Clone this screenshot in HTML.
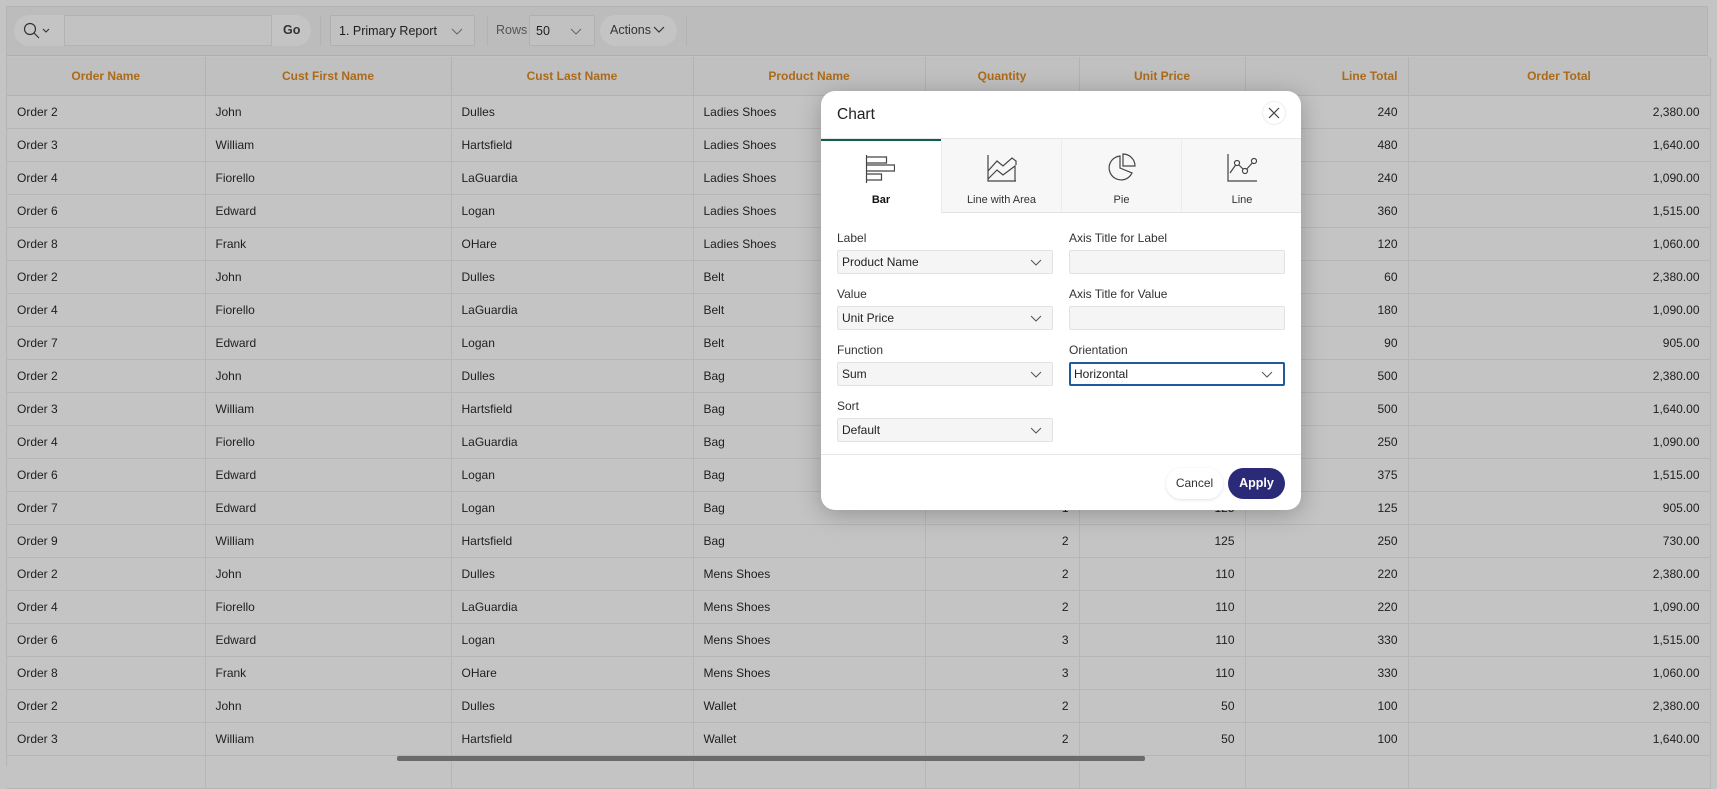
<!DOCTYPE html>
<html><head><meta charset="utf-8"><style>
*{box-sizing:border-box;margin:0;padding:0}
body{width:1717px;height:761px;overflow:hidden;background:#c4c4c4;font-family:"Liberation Sans",sans-serif;position:relative;color:#1e1e1e}
.abs{position:absolute}
.wrap{left:6px;top:6px;width:1702px;height:760px;background:#c3c3c3;border:1px solid #b4b4b4}
.tb{left:7px;top:7px;width:1700px;height:49px;background:#bcbcbc;border-bottom:1px solid #aeaeae}
.pill{background:#c4c4c4;border-radius:16px}
.box{background:#c1c1c1;border:1px solid #b0b0b0;border-radius:2px;font-size:12.5px;line-height:30px}
table{position:absolute;left:7px;top:57px;border-collapse:collapse;font-size:12px}
th{height:38px;background:#c0c0c0;color:#ac6a18;font-weight:bold;font-size:12px;border-right:1px solid #b2b2b2;border-bottom:1px solid #b2b2b2}
td{height:33px;border-right:1px solid #b6b6b6;border-bottom:1px solid #b6b6b6;padding:0 10px;background:#c4c4c4}
td.r{text-align:right}
.dlg{left:821px;top:91px;width:480px;height:419px;background:#fff;border-radius:14px;box-shadow:0 4px 24px rgba(0,0,0,.25);overflow:hidden}
.tab{position:absolute;top:48px;height:74px;width:120px;background:#f7f7f7;border-bottom:1px solid #e2e2e2;border-left:1px solid #ececec;text-align:center;font-size:11px;color:#333}
.tab svg{position:absolute;top:14px;left:45px}
.tab span{position:absolute;top:55px;left:0;right:0}
.lbl{position:absolute;font-size:12px;color:#333}
.sel{position:absolute;width:216px;height:24px;background:#f5f5f5;border:1px solid #e2e2e2;border-radius:2px;font-size:12px;line-height:22px;padding-left:4px;color:#222}
.sel svg{position:absolute;right:10px;top:8px}
</style></head><body>
<div class="abs wrap"></div>
<div class="abs tb"></div>
<div class="abs pill" style="left:14px;top:15px;width:297px;height:31px"></div>
<svg class="abs" style="left:22px;top:21px" width="36" height="22"><circle cx="8" cy="8" r="5.5" fill="none" stroke="#333" stroke-width="1.2"/><path d="M12 12L17 17" stroke="#333" stroke-width="1.2"/><path d="M21 8l3 3 3-3" fill="none" stroke="#333" stroke-width="1.1"/></svg>
<div class="abs" style="left:64px;top:15px;width:208px;height:31px;background:#c2c2c2;border:1px solid #b3b3b3"></div>
<div class="abs" style="left:283px;top:23px;font-size:12.5px;font-weight:bold;color:#333">Go</div>
<div class="abs" style="left:320px;top:16px;width:1px;height:30px;background:#b2b2b2"></div>
<div class="abs box" style="left:330px;top:15px;width:145px;height:31px;padding-left:8px">1. Primary Report</div>
<svg class="abs" style="left:451px;top:28px" width="12" height="8"><path d="M1 1l5 5 5-5" fill="none" stroke="#666" stroke-width="1"/></svg>
<div class="abs" style="left:487px;top:16px;width:1px;height:30px;background:#b2b2b2"></div>
<div class="abs" style="left:496px;top:23px;font-size:12.5px;color:#555">Rows</div>
<div class="abs box" style="left:529px;top:15px;width:66px;height:31px;padding-left:6px">50</div>
<svg class="abs" style="left:570px;top:28px" width="12" height="8"><path d="M1 1l5 5 5-5" fill="none" stroke="#666" stroke-width="1"/></svg>
<div class="abs pill" style="left:600px;top:15px;width:77px;height:31px;font-size:12.5px;line-height:31px;padding-left:10px;color:#333">Actions</div>
<svg class="abs" style="left:653px;top:26px" width="12" height="8"><path d="M1 1l5 5 5-5" fill="none" stroke="#333" stroke-width="1.2"/></svg>
<div class="abs" style="left:686px;top:16px;width:1px;height:30px;background:#b2b2b2"></div>

<table>
<tr><th style="width:198px">Order Name</th><th style="width:246px">Cust First Name</th><th style="width:242px">Cust Last Name</th><th style="width:232px">Product Name</th><th style="width:154px">Quantity</th><th style="width:166px">Unit Price</th><th style="width:163px;text-align:right;padding-right:10px">Line Total</th><th style="width:302px">Order Total</th></tr>
<tr><td>Order 2</td><td>John</td><td>Dulles</td><td>Ladies Shoes</td><td class="r">2</td><td class="r">120</td><td class="r">240</td><td class="r">2,380.00</td></tr>
<tr><td>Order 3</td><td>William</td><td>Hartsfield</td><td>Ladies Shoes</td><td class="r">4</td><td class="r">120</td><td class="r">480</td><td class="r">1,640.00</td></tr>
<tr><td>Order 4</td><td>Fiorello</td><td>LaGuardia</td><td>Ladies Shoes</td><td class="r">2</td><td class="r">120</td><td class="r">240</td><td class="r">1,090.00</td></tr>
<tr><td>Order 6</td><td>Edward</td><td>Logan</td><td>Ladies Shoes</td><td class="r">3</td><td class="r">120</td><td class="r">360</td><td class="r">1,515.00</td></tr>
<tr><td>Order 8</td><td>Frank</td><td>OHare</td><td>Ladies Shoes</td><td class="r">1</td><td class="r">120</td><td class="r">120</td><td class="r">1,060.00</td></tr>
<tr><td>Order 2</td><td>John</td><td>Dulles</td><td>Belt</td><td class="r">2</td><td class="r">30</td><td class="r">60</td><td class="r">2,380.00</td></tr>
<tr><td>Order 4</td><td>Fiorello</td><td>LaGuardia</td><td>Belt</td><td class="r">6</td><td class="r">30</td><td class="r">180</td><td class="r">1,090.00</td></tr>
<tr><td>Order 7</td><td>Edward</td><td>Logan</td><td>Belt</td><td class="r">3</td><td class="r">30</td><td class="r">90</td><td class="r">905.00</td></tr>
<tr><td>Order 2</td><td>John</td><td>Dulles</td><td>Bag</td><td class="r">4</td><td class="r">125</td><td class="r">500</td><td class="r">2,380.00</td></tr>
<tr><td>Order 3</td><td>William</td><td>Hartsfield</td><td>Bag</td><td class="r">4</td><td class="r">125</td><td class="r">500</td><td class="r">1,640.00</td></tr>
<tr><td>Order 4</td><td>Fiorello</td><td>LaGuardia</td><td>Bag</td><td class="r">2</td><td class="r">125</td><td class="r">250</td><td class="r">1,090.00</td></tr>
<tr><td>Order 6</td><td>Edward</td><td>Logan</td><td>Bag</td><td class="r">3</td><td class="r">125</td><td class="r">375</td><td class="r">1,515.00</td></tr>
<tr><td>Order 7</td><td>Edward</td><td>Logan</td><td>Bag</td><td class="r">1</td><td class="r">125</td><td class="r">125</td><td class="r">905.00</td></tr>
<tr><td>Order 9</td><td>William</td><td>Hartsfield</td><td>Bag</td><td class="r">2</td><td class="r">125</td><td class="r">250</td><td class="r">730.00</td></tr>
<tr><td>Order 2</td><td>John</td><td>Dulles</td><td>Mens Shoes</td><td class="r">2</td><td class="r">110</td><td class="r">220</td><td class="r">2,380.00</td></tr>
<tr><td>Order 4</td><td>Fiorello</td><td>LaGuardia</td><td>Mens Shoes</td><td class="r">2</td><td class="r">110</td><td class="r">220</td><td class="r">1,090.00</td></tr>
<tr><td>Order 6</td><td>Edward</td><td>Logan</td><td>Mens Shoes</td><td class="r">3</td><td class="r">110</td><td class="r">330</td><td class="r">1,515.00</td></tr>
<tr><td>Order 8</td><td>Frank</td><td>OHare</td><td>Mens Shoes</td><td class="r">3</td><td class="r">110</td><td class="r">330</td><td class="r">1,060.00</td></tr>
<tr><td>Order 2</td><td>John</td><td>Dulles</td><td>Wallet</td><td class="r">2</td><td class="r">50</td><td class="r">100</td><td class="r">2,380.00</td></tr>
<tr><td>Order 3</td><td>William</td><td>Hartsfield</td><td>Wallet</td><td class="r">2</td><td class="r">50</td><td class="r">100</td><td class="r">1,640.00</td></tr>
<tr><td>&nbsp;</td><td></td><td></td><td></td><td></td><td></td><td></td><td></td></tr>
</table>
<div class="abs" style="left:397px;top:756px;width:748px;height:5px;background:#6a6a6a;border-radius:2px"></div>

<div class="abs dlg">
  <div style="position:absolute;left:16px;top:15px;font-size:15.5px;color:#222">Chart</div>
  <div style="position:absolute;left:441px;top:10px;width:24px;height:24px;border-radius:50%;border:1px solid #eee"></div>
  <svg style="position:absolute;left:447px;top:16px" width="12" height="12"><path d="M1 1l10 10M11 1L1 11" stroke="#444" stroke-width="1.2"/></svg>
  <div style="position:absolute;left:0;top:47px;width:480px;height:1px;background:#e6e6e6"></div>
  <div class="tab" style="left:0;background:#fff;border-left:none;border-bottom:none;border-top:2px solid #0f5e4e;color:#111;font-weight:bold"><svg width="30" height="30" style="left:44px;top:13px"><path d="M1.5 1v28M1.5 3h20v6h-20M1.5 11h28v6h-28M1.5 20h15v6h-15" fill="none" stroke="#444" stroke-width="1.2"/></svg><span style="top:53px">Bar</span></div>
  <div class="tab" style="left:120px"><svg width="30" height="30"><path d="M1 2v26h28M1 26l9-9 6 5 12-9v15" fill="none" stroke="#444" stroke-width="1.2"/><path d="M1 18l9-10 6 5 9-8 4 3v4" fill="none" stroke="#444" stroke-width="1.2"/></svg><span>Line with Area</span></div>
  <div class="tab" style="left:240px"><svg width="30" height="30"><path d="M13 3a12 12 0 1 0 12 17L13 15z" fill="none" stroke="#444" stroke-width="1.2"/><path d="M16 1v12h12A12 12 0 0 0 16 1z" fill="none" stroke="#444" stroke-width="1.2"/></svg><span>Pie</span></div>
  <div class="tab" style="left:360px;width:121px"><svg width="30" height="30"><path d="M1 1v27h29" fill="none" stroke="#444" stroke-width="1.2"/><path d="M3 20l7-10 8 8 9-10" fill="none" stroke="#444" stroke-width="1.2"/><circle cx="10" cy="10" r="2.5" fill="#fff" stroke="#444" stroke-width="1.2"/><circle cx="18" cy="18" r="2.5" fill="#fff" stroke="#444" stroke-width="1.2"/><circle cx="27" cy="8" r="2.5" fill="#fff" stroke="#444" stroke-width="1.2"/></svg><span>Line</span></div>

  <div class="lbl" style="left:16px;top:140px">Label</div>
  <div class="sel" style="left:16px;top:159px">Product Name<svg width="12" height="7"><path d="M1 1l5 5 5-5" fill="none" stroke="#555"/></svg></div>
  <div class="lbl" style="left:248px;top:140px">Axis Title for Label</div>
  <div class="sel" style="left:248px;top:159px"></div>
  <div class="lbl" style="left:16px;top:196px">Value</div>
  <div class="sel" style="left:16px;top:215px">Unit Price<svg width="12" height="7"><path d="M1 1l5 5 5-5" fill="none" stroke="#555"/></svg></div>
  <div class="lbl" style="left:248px;top:196px">Axis Title for Value</div>
  <div class="sel" style="left:248px;top:215px"></div>
  <div class="lbl" style="left:16px;top:252px">Function</div>
  <div class="sel" style="left:16px;top:271px">Sum<svg width="12" height="7"><path d="M1 1l5 5 5-5" fill="none" stroke="#555"/></svg></div>
  <div class="lbl" style="left:248px;top:252px">Orientation</div>
  <div class="sel" style="left:248px;top:271px;background:#fff;border:2px solid #1f5aa0;line-height:20px;padding-left:3px">Horizontal<svg width="12" height="7" style="top:7px"><path d="M1 1l5 5 5-5" fill="none" stroke="#555"/></svg></div>
  <div class="lbl" style="left:16px;top:308px">Sort</div>
  <div class="sel" style="left:16px;top:327px">Default<svg width="12" height="7"><path d="M1 1l5 5 5-5" fill="none" stroke="#555"/></svg></div>

  <div style="position:absolute;left:0;top:363px;width:480px;height:1px;background:#e6e6e6"></div>
  <div style="position:absolute;left:345px;top:377px;width:57px;height:31px;border-radius:16px;box-shadow:0 1px 3px rgba(0,0,0,.12);font-size:12px;line-height:31px;text-align:center;color:#333">Cancel</div>
  <div style="position:absolute;left:407px;top:377px;width:57px;height:31px;border-radius:16px;background:#2b2a78;color:#fff;font-weight:bold;font-size:12.5px;line-height:31px;text-align:center">Apply</div>
</div>
</body></html>
